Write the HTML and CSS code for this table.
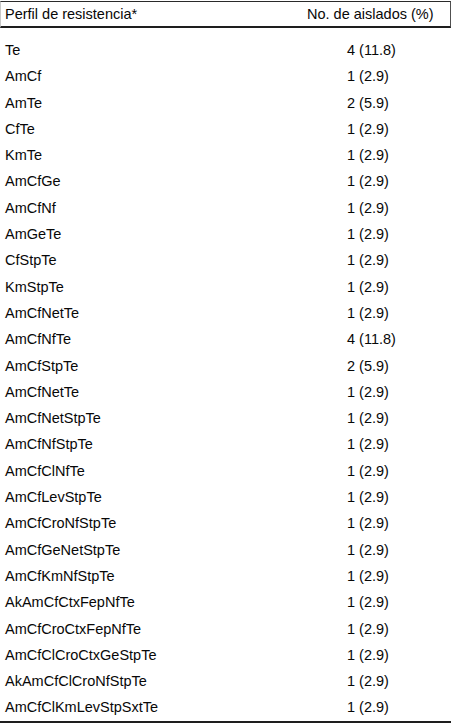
FILE: index.html
```html
<!DOCTYPE html>
<html lang="es">
<head>
<meta charset="utf-8">
<title>Perfil de resistencia</title>
<link rel="stylesheet" href="styles.css">
</head>
<body>
<div class="tbl">
  <div class="head">
    <div class="c1">Perfil de resistencia*</div>
    <div class="c2">No. de aislados (%)</div>
  </div>
  <div class="body">
    <div class="row"><div class="c1">Te</div><div class="c2">4 (11.8)</div></div>
    <div class="row"><div class="c1">AmCf</div><div class="c2">1 (2.9)</div></div>
    <div class="row"><div class="c1">AmTe</div><div class="c2">2 (5.9)</div></div>
    <div class="row"><div class="c1">CfTe</div><div class="c2">1 (2.9)</div></div>
    <div class="row"><div class="c1">KmTe</div><div class="c2">1 (2.9)</div></div>
    <div class="row"><div class="c1">AmCfGe</div><div class="c2">1 (2.9)</div></div>
    <div class="row"><div class="c1">AmCfNf</div><div class="c2">1 (2.9)</div></div>
    <div class="row"><div class="c1">AmGeTe</div><div class="c2">1 (2.9)</div></div>
    <div class="row"><div class="c1">CfStpTe</div><div class="c2">1 (2.9)</div></div>
    <div class="row"><div class="c1">KmStpTe</div><div class="c2">1 (2.9)</div></div>
    <div class="row"><div class="c1">AmCfNetTe</div><div class="c2">1 (2.9)</div></div>
    <div class="row"><div class="c1">AmCfNfTe</div><div class="c2">4 (11.8)</div></div>
    <div class="row"><div class="c1">AmCfStpTe</div><div class="c2">2 (5.9)</div></div>
    <div class="row"><div class="c1">AmCfNetTe</div><div class="c2">1 (2.9)</div></div>
    <div class="row"><div class="c1">AmCfNetStpTe</div><div class="c2">1 (2.9)</div></div>
    <div class="row"><div class="c1">AmCfNfStpTe</div><div class="c2">1 (2.9)</div></div>
    <div class="row"><div class="c1">AmCfClNfTe</div><div class="c2">1 (2.9)</div></div>
    <div class="row"><div class="c1">AmCfLevStpTe</div><div class="c2">1 (2.9)</div></div>
    <div class="row"><div class="c1">AmCfCroNfStpTe</div><div class="c2">1 (2.9)</div></div>
    <div class="row"><div class="c1">AmCfGeNetStpTe</div><div class="c2">1 (2.9)</div></div>
    <div class="row"><div class="c1">AmCfKmNfStpTe</div><div class="c2">1 (2.9)</div></div>
    <div class="row"><div class="c1">AkAmCfCtxFepNfTe</div><div class="c2">1 (2.9)</div></div>
    <div class="row"><div class="c1">AmCfCroCtxFepNfTe</div><div class="c2">1 (2.9)</div></div>
    <div class="row"><div class="c1">AmCfClCroCtxGeStpTe</div><div class="c2">1 (2.9)</div></div>
    <div class="row"><div class="c1">AkAmCfClCroNfStpTe</div><div class="c2">1 (2.9)</div></div>
    <div class="row"><div class="c1">AmCfClKmLevStpSxtTe</div><div class="c2">1 (2.9)</div></div>
  </div>
</div>
</body>
</html>
```

FILE: styles.css
```css
html, body {
  margin: 0;
  padding: 0;
  background: #ffffff;
}

.tbl {
  width: 451px;
  margin-top: 1px;
  font-family: "Liberation Sans", Arial, sans-serif;
  font-size: 14.5px;
  color: #080808;
}

.head {
  display: grid;
  grid-template-columns: 306px 1fr;
  height: 24px;
  line-height: 24px;
  border-top: 1px solid #2a2a2a;
  border-bottom: 2px solid #1e1e1e;
  border-left: 1px solid #c8c8c8;
  border-right: 1px solid #505050;
}

.head .c1 {
  padding-left: 4px;
}

.body {
  padding-top: 9px;
  border-bottom: 2px solid #1e1e1e;
}

.row {
  display: grid;
  grid-template-columns: 307px 1fr;
  height: 26.3px;
  line-height: 26.3px;
}

.row .c1 {
  padding-left: 5px;
}

.row .c2 {
  padding-left: 40px;
}
```
